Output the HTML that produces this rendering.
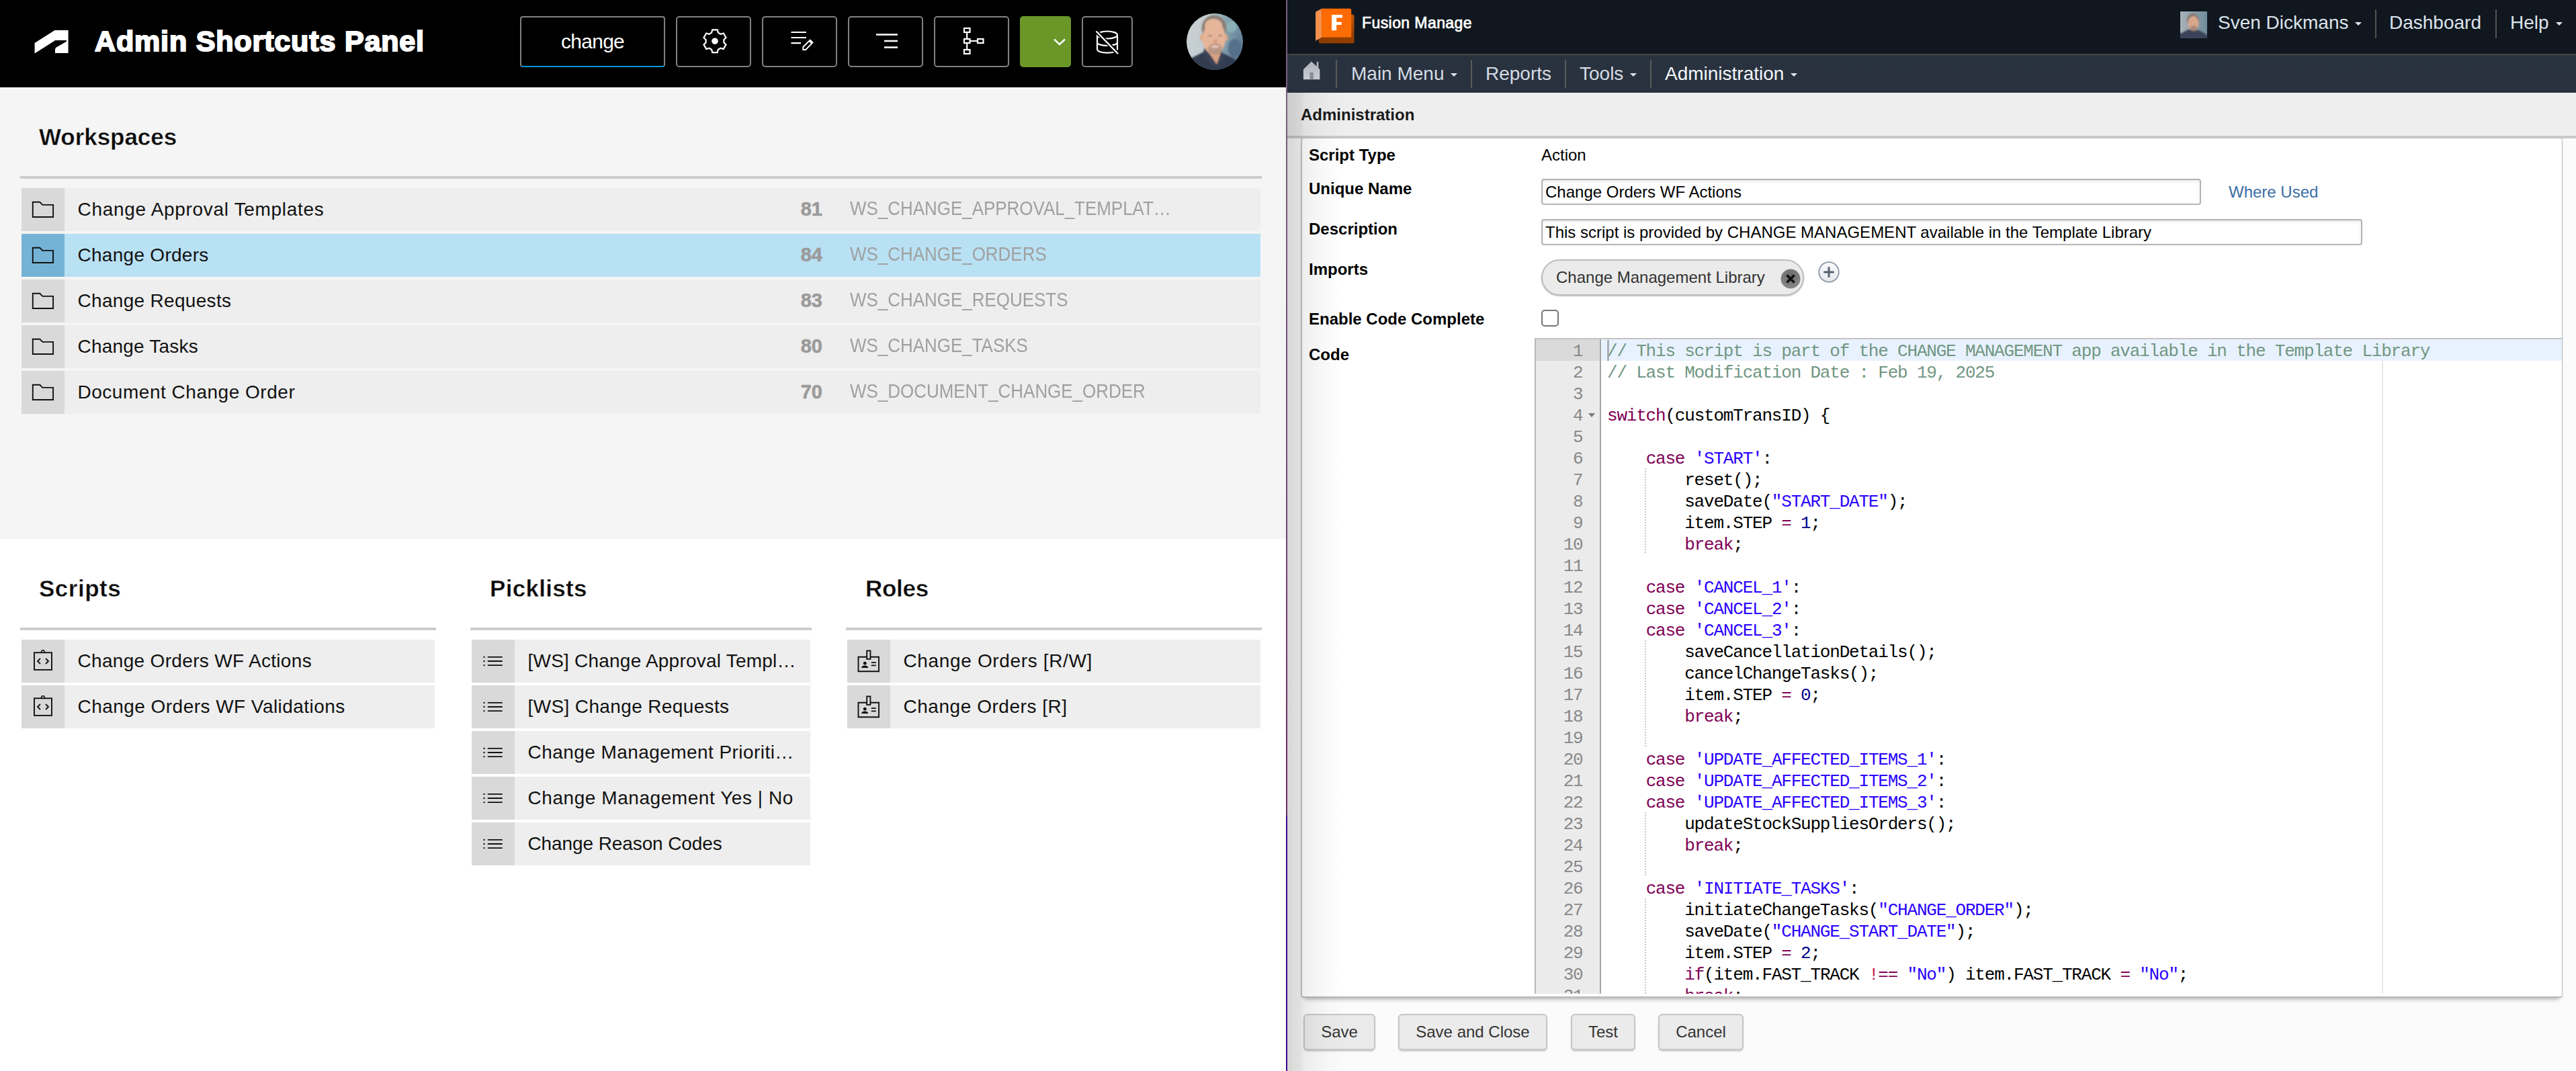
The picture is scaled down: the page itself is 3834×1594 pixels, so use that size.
<!DOCTYPE html>
<html><head><meta charset="utf-8"><title>Admin Shortcuts Panel</title>
<style>
*{box-sizing:border-box;margin:0;padding:0}
html,body{width:3834px;height:1594px;overflow:hidden;background:#fff}
body{font-family:"Liberation Sans",sans-serif;position:relative;color:#000}
.abs{position:absolute}
/* ================= LEFT PANEL ================= */
#left{position:absolute;left:0;top:0;width:1914px;height:1594px;background:#fff;overflow:hidden}
#lhead{position:absolute;left:0;top:0;width:1914px;height:130px;background:#000}
#lgray{position:absolute;left:0;top:130px;width:1914px;height:672px;background:#f5f5f5}
#ltitle{position:absolute;left:141px;top:34px;font-size:43px;font-weight:bold;color:#fff;letter-spacing:0.85px;line-height:54px;white-space:nowrap;-webkit-text-stroke:2.1px #fff}
#search{position:absolute;left:774px;top:24px;width:216px;height:76px;border:2px solid #808080;border-bottom:2px solid #0696d7;border-radius:4px;color:#fff;font-size:30px;text-align:center;line-height:72px;letter-spacing:-0.7px}
.tb{position:absolute;top:24px;height:76px;width:112px;border:2px solid #808080;border-radius:5px}
.tb svg{position:absolute;left:0;top:0}
#tbgreen{position:absolute;left:1518px;top:24px;width:76px;height:76px;background:#6a9728;border-radius:5px}
.h2{position:absolute;font-size:35px;font-weight:bold;color:#0a0a0a;white-space:nowrap;line-height:44px;letter-spacing:0.15px;-webkit-text-stroke:0.4px #fff}
.hr{position:absolute;height:4px;background:#cccccc}
.row{position:absolute;height:64px;background:#eeeeee}
.row .ic{position:absolute;left:0;top:0;width:64px;height:64px;background:#d9d9d9}
.row .ic svg{position:absolute;left:0;top:0}
.row .tx{position:absolute;left:83.5px;top:0;line-height:64.5px;font-size:28px;color:#121212;white-space:nowrap;letter-spacing:0.05px}
.row.sel{background:#b9e1f4}
.row.sel .ic{background:#75b3d6}
.row .id{position:absolute;right:652px;top:0;line-height:63px;font-size:29px;font-weight:bold;color:#9b9b9b;-webkit-text-stroke:0.6px #9b9b9b}
.row .sys{position:absolute;left:1233px;top:0;line-height:60px;font-size:30px;color:#a0a0a0;white-space:nowrap;transform-origin:0 50%;transform:scaleX(0.865)}
/* ================= RIGHT PANEL ================= */
#wborder{position:absolute;left:1914px;top:0;width:2px;height:1594px;background:linear-gradient(#7a627e 0,#75507a 40%,#6e2b5e 70%,#6e2b5e 76%,#3a0a8c 76.3%,#3a0a8c 100%)}
#right{position:absolute;left:1916px;top:0;width:1918px;height:1594px;background:#fbfbfb;overflow:hidden}
#rtop{position:absolute;left:0;top:0;width:1918px;height:82px;background:#10171f;border-bottom:2px solid #46443f}
#rnav{position:absolute;left:0;top:82px;width:1918px;height:56px;background:linear-gradient(#29323f,#28313d)}
.nv{position:absolute;top:-1px;line-height:58px;font-size:28px;color:#d5dce5;white-space:nowrap}
.nsep{position:absolute;top:7px;width:2px;height:42px;background:#5a5a58}
.caret{position:absolute;width:0;height:0;border-left:5px solid transparent;border-right:5px solid transparent;border-top:5px solid #dfe6ee}
.tv{position:absolute;top:0;line-height:67px;font-size:28px;color:#dce3eb;white-space:nowrap;margin-left:-1px}
.tsep{position:absolute;top:14px;width:2px;height:43px;background:#55534f}
#radm{position:absolute;left:0;top:138px;width:1918px;height:68px;background:#eeeeee;border-bottom:4px solid #c9c9c9}
#radm span{position:absolute;left:20px;top:0;line-height:65px;z-index:60;font-size:24px;font-weight:bold;color:#1a1a1a}
#lshadow{position:absolute;left:0;top:138px;width:90px;height:1456px;z-index:50;background:linear-gradient(90deg,rgba(0,0,0,0.15) 0,rgba(0,0,0,0.125) 8px,rgba(0,0,0,0.10) 20px,rgba(0,0,0,0.065) 24px,rgba(0,0,0,0.04) 40px,rgba(0,0,0,0.018) 60px,rgba(0,0,0,0) 88px)}
#box{position:absolute;left:20px;top:205px;width:1878px;height:1280px;background:#fff;border:1px solid #bcbcbc;border-left:2px solid #c6c6c6;border-bottom:2px solid #b9b9b9;border-radius:4px;box-shadow:0 6px 7px -5px rgba(0,0,0,0.4)}
#boxgrad{display:none}
.lb{position:absolute;left:32px;font-size:24px;font-weight:bold;color:#000;line-height:30px;white-space:nowrap}
.val{position:absolute;left:378px;font-size:24px;color:#000;line-height:30px;white-space:nowrap}
.inp{position:absolute;left:378px;height:39px;border:2px solid #b4b4b4;border-radius:4px;background:#fff;box-shadow:inset 0 2px 4px rgba(0,0,0,0.10);font-size:24px;line-height:35px;padding-left:4px;white-space:nowrap;overflow:hidden;color:#000}
#chip{position:absolute;left:378px;top:386px;width:391px;height:54px;border-radius:27px;background:#ebebeb;border:2px solid #bdbdbd;box-shadow:0 1px 2px rgba(0,0,0,0.25)}
#chip span{position:absolute;left:20px;top:0;line-height:50px;font-size:24px;color:#333}
/* code editor */
#ed{position:absolute;left:2284px;top:503px;width:1529px;height:976px;overflow:hidden;background:#fff;border-top:2px solid #c4c4c4}
#gut{position:absolute;left:0;top:0;width:99px;height:1100px;background:#ebebeb;border-left:2px solid #b8b8b8;border-right:2px solid #a5a5a5}
.gn{position:relative;height:32px;line-height:32px;font-family:"Liberation Mono",monospace;font-size:26px;letter-spacing:-1.2px;color:#888;text-align:right;padding-right:25.5px;padding-top:2px}
#gact{position:absolute;left:0;top:0;width:95px;height:32px;background:#dadada}
#lact{position:absolute;left:99px;top:0;width:1430px;height:32px;background:#e8f2fe}
#pm{position:absolute;left:1261px;top:0;width:2px;height:1100px;background:#e8e8e8}
#code{position:absolute;left:108px;top:0}
.ln{height:32px;line-height:32px;font-family:"Liberation Mono",monospace;font-size:26px;letter-spacing:-1.2px;color:#000;white-space:pre;padding-top:2px}
.k{color:#7f0055}.s{color:#2a00ff}.n{color:#00008b}.c{color:#719682}.r{color:#c4184f}
.guide{position:absolute;left:164px;width:2px;height:32px;background-image:linear-gradient(#c6c6c6 50%,rgba(0,0,0,0) 50%);background-size:2px 4px}
.btn{position:absolute;top:1509px;height:54px;border:2px solid #c6c6c6;border-radius:6px;background:#ebebeb;box-shadow:0 2px 2px rgba(0,0,0,0.17);font-size:24px;color:#333;text-align:center;line-height:49px}

</style></head>
<body>
<div id="left">
  <div id="lgray"></div>
  <div id="lhead">
    <svg class="abs" style="left:48px;top:42px" width="58" height="40" viewBox="48 42 58 40"><path fill="#fff" d="M51.6 64 L81.6 45 L101.6 45 L101.6 78.9 L82 78.9 L82 73.1 L83.3 70.8 L99 61.7 L99 60 L82.3 60 L52.5 78.9 L51.6 78.9 Z"/></svg>
    <div id="ltitle">Admin Shortcuts Panel</div>
    <div id="search">change</div>
    <!-- gear -->
    <div class="tb" style="left:1006px"><svg width="108" height="72" viewBox="0 0 108 72" fill="none" stroke="#fff" stroke-width="2.2" stroke-linejoin="miter">
      <g transform="translate(56,35.2)">
      <path d="M4.9 -12.6 L3.7 -16.9 L-3.7 -16.9 L-4.9 -12.6 L-8.5 -10.5 L-12.8 -11.7 L-16.5 -5.2 L-13.4 -2.1 L-13.4 2.1 L-16.5 5.2 L-12.8 11.7 L-8.5 10.5 L-4.9 12.6 L-3.7 16.9 L3.7 16.9 L4.9 12.6 L8.5 10.5 L12.8 11.7 L16.5 5.2 L13.4 2.1 L13.4 -2.1 L16.5 -5.2 L12.8 -11.7 L8.5 -10.5 Z"/>
      <circle cx="0" cy="0" r="4.8" fill="#fff" stroke="none"/></g></svg></div>
    <!-- edit -->
    <div class="tb" style="left:1134px"><svg width="108" height="72" viewBox="0 0 108 72" fill="none" stroke="#fff" stroke-width="2.2">
      <path d="M41.5 22 H64 M41.5 30 H64 M41.5 38.2 H56"/>
      <path d="M59.3 48 L59.3 44 L69.5 33.8 L73.3 37.6 L63.2 48 Z" stroke-width="1.9"/><path d="M67.6 35.6 L71.6 39.5 L74.4 36.7 L70.4 32.8 Z" fill="#fff" stroke="none"/></svg></div>
    <!-- align -->
    <div class="tb" style="left:1262px"><svg width="108" height="72" viewBox="0 0 108 72" fill="none" stroke="#fff" stroke-width="2.4">
      <path d="M40 25.5 H72 M52 35 H72 M52 44.5 H72"/></svg></div>
    <!-- tree -->
    <div class="tb" style="left:1390px"><svg width="108" height="72" viewBox="0 0 108 72" fill="none" stroke="#fff" stroke-width="2.2">
      <rect x="43" y="16" width="8.5" height="6"/><rect x="43" y="32" width="8.5" height="6"/><rect x="43" y="48" width="8.5" height="6"/><rect x="63" y="32" width="8.5" height="6"/>
      <path d="M47.2 22 V32 M47.2 38 V48 M51.5 35 H63"/></svg></div>
    <div id="tbgreen"><svg class="abs" style="left:0;top:0" width="76" height="76" viewBox="0 0 76 76" fill="none" stroke="#fff" stroke-width="2.4"><path d="M51 34.5 L59 42 L67 34.5"/></svg></div>
    <!-- db -->
    <div class="tb" style="left:1610px;width:76px"><svg width="72" height="72" viewBox="0 0 72 72" fill="none" stroke="#fff" stroke-width="2.2">
      <ellipse cx="36" cy="26" rx="15" ry="5.5"/><path d="M21 26 V47 C21 54.5 51 54.5 51 47 V26"/><path d="M21 37 C21 43.5 51 43.5 51 37"/>
      <path d="M19 20 L52 54" stroke="#000" stroke-width="6"/><path d="M19.5 20.5 L52 54" stroke-width="2.4"/></svg></div>
    <!-- avatar -->
    <svg class="abs" style="left:1766px;top:20px" width="84" height="84" viewBox="0 0 84 84">
      <defs><clipPath id="avc"><circle cx="42" cy="42" r="42"/></clipPath>
      <linearGradient id="avbg" x1="0" x2="1" y1="0" y2="0.25"><stop offset="0" stop-color="#ccd2d6"/><stop offset="0.4" stop-color="#c3ccd0"/><stop offset="0.62" stop-color="#8fadb6"/><stop offset="1" stop-color="#66849a"/></linearGradient>
      <filter id="avbl" x="-20%" y="-20%" width="140%" height="140%"><feGaussianBlur stdDeviation="1.3"/></filter></defs>
      <g clip-path="url(#avc)"><rect width="84" height="84" fill="url(#avbg)"/>
      <g filter="url(#avbl)">
        <ellipse cx="72" cy="52" rx="10" ry="14" fill="#55708a"/>
        <ellipse cx="66" cy="20" rx="9" ry="8" fill="#8cb0b8"/>
        <path d="M4 68 L26 57 L27 52 L52 58 L72 68 L84 76 L84 90 L0 90 Z" fill="#333c51"/>
        <path d="M30 50 L52 50 L51 62 L45 76 L34 60 Z" fill="#d8a184"/>
        <path d="M26.5 52 L34 60 L44.5 76 L40 80 L25 60 Z" fill="#3a4359"/>
        <path d="M51.5 57 L45 76 L48 80 L58 63 Z" fill="#3a4359"/>
        <ellipse cx="41" cy="22" rx="18.5" ry="19.5" fill="#8c8078"/>
        <ellipse cx="22.5" cy="36" rx="2.5" ry="5" fill="#dfa88b"/><ellipse cx="59.5" cy="36" rx="2.3" ry="5" fill="#d9a286"/>
        <ellipse cx="41" cy="37" rx="17" ry="24.5" fill="#e6b497"/>
        <ellipse cx="40" cy="18.5" rx="13" ry="10.5" fill="#e6b69a"/>
        <ellipse cx="42.5" cy="53" rx="10.5" ry="8.5" fill="#b89683"/>
        <ellipse cx="42.5" cy="49.5" rx="6.5" ry="2.2" fill="#e6c2b8"/>
        <ellipse cx="35" cy="33" rx="2.6" ry="1.1" fill="#6f6c72"/><ellipse cx="50" cy="33" rx="2.6" ry="1.1" fill="#6f6c72"/>
        <ellipse cx="43" cy="42" rx="2.5" ry="4" fill="#d69f84"/>
      </g></g></svg>
  </div>

  <div class="h2" style="left:58px;top:182px;-webkit-text-stroke:0.4px #f5f5f5;letter-spacing:-0.05px">Workspaces</div>
  <div class="hr" style="left:30px;top:262px;width:1848px"></div>
  <div class="row" style="left:32px;top:280px;width:1844px"><div class="ic"><svg width="64" height="64" viewBox="0 0 64 64" fill="none" stroke="#111" stroke-width="1.9"><path d="M16.8 43 V20.8 H27.3 L31.3 24.9 H47.1 V43 Z"/></svg></div><div class="tx" style="letter-spacing:0.69px">Change Approval Templates</div><div class="id">81</div><div class="sys">WS_CHANGE_APPROVAL_TEMPLAT…</div></div>
<div class="row sel" style="left:32px;top:348px;width:1844px"><div class="ic"><svg width="64" height="64" viewBox="0 0 64 64" fill="none" stroke="#111" stroke-width="1.9"><path d="M16.8 43 V20.8 H27.3 L31.3 24.9 H47.1 V43 Z"/></svg></div><div class="tx" style="letter-spacing:0.28px">Change Orders</div><div class="id">84</div><div class="sys">WS_CHANGE_ORDERS</div></div>
<div class="row" style="left:32px;top:416px;width:1844px"><div class="ic"><svg width="64" height="64" viewBox="0 0 64 64" fill="none" stroke="#111" stroke-width="1.9"><path d="M16.8 43 V20.8 H27.3 L31.3 24.9 H47.1 V43 Z"/></svg></div><div class="tx" style="letter-spacing:0.31px">Change Requests</div><div class="id">83</div><div class="sys">WS_CHANGE_REQUESTS</div></div>
<div class="row" style="left:32px;top:484px;width:1844px"><div class="ic"><svg width="64" height="64" viewBox="0 0 64 64" fill="none" stroke="#111" stroke-width="1.9"><path d="M16.8 43 V20.8 H27.3 L31.3 24.9 H47.1 V43 Z"/></svg></div><div class="tx" style="letter-spacing:0.21px">Change Tasks</div><div class="id">80</div><div class="sys">WS_CHANGE_TASKS</div></div>
<div class="row" style="left:32px;top:552px;width:1844px"><div class="ic"><svg width="64" height="64" viewBox="0 0 64 64" fill="none" stroke="#111" stroke-width="1.9"><path d="M16.8 43 V20.8 H27.3 L31.3 24.9 H47.1 V43 Z"/></svg></div><div class="tx" style="letter-spacing:0.52px">Document Change Order</div><div class="id">70</div><div class="sys">WS_DOCUMENT_CHANGE_ORDER</div></div>


  <div class="h2" style="left:58px;top:854px;letter-spacing:0.5px">Scripts</div>
  <div class="hr" style="left:30px;top:934px;width:619px"></div>
  <div class="h2" style="left:729px;top:854px;letter-spacing:0.3px">Picklists</div>
  <div class="hr" style="left:700px;top:934px;width:508px"></div>
  <div class="h2" style="left:1288px;top:854px;letter-spacing:-0.3px">Roles</div>
  <div class="hr" style="left:1259px;top:934px;width:619px"></div>
  <div class="row" style="left:32px;top:952px;width:615px"><div class="ic"><svg width="64" height="64" viewBox="0 0 64 64" fill="none" stroke="#111" stroke-width="1.9"><rect x="19" y="19.3" width="26" height="25.6"/><path d="M29.7 19 A2.4 2.5 0 1 1 34.3 19" stroke-width="1.6"/><path d="M28 28 L24 32 L28 36 M36 28 L40 32 L36 36" stroke-width="1.8"/></svg></div><div class="tx" style="letter-spacing:0.32px">Change Orders WF Actions</div></div>
<div class="row" style="left:32px;top:1020px;width:615px"><div class="ic"><svg width="64" height="64" viewBox="0 0 64 64" fill="none" stroke="#111" stroke-width="1.9"><rect x="19" y="19.3" width="26" height="25.6"/><path d="M29.7 19 A2.4 2.5 0 1 1 34.3 19" stroke-width="1.6"/><path d="M28 28 L24 32 L28 36 M36 28 L40 32 L36 36" stroke-width="1.8"/></svg></div><div class="tx" style="letter-spacing:0.46px">Change Orders WF Validations</div></div>
<div class="row" style="left:702px;top:952px;width:504px"><div class="ic"><svg width="64" height="64" viewBox="0 0 64 64" fill="none" stroke="#111" stroke-width="1.9" stroke-linecap="round"><path d="M24.6 25.9 H45 M24.6 32 H45 M24.6 38.1 H45"/><circle cx="18.5" cy="25.9" r="1.2" fill="#111" stroke="none"/><circle cx="18.5" cy="32" r="1.2" fill="#111" stroke="none"/><circle cx="18.5" cy="38.1" r="1.2" fill="#111" stroke="none"/></svg></div><div class="tx" style="letter-spacing:0.22px">[WS] Change Approval Templ…</div></div>
<div class="row" style="left:702px;top:1020px;width:504px"><div class="ic"><svg width="64" height="64" viewBox="0 0 64 64" fill="none" stroke="#111" stroke-width="1.9" stroke-linecap="round"><path d="M24.6 25.9 H45 M24.6 32 H45 M24.6 38.1 H45"/><circle cx="18.5" cy="25.9" r="1.2" fill="#111" stroke="none"/><circle cx="18.5" cy="32" r="1.2" fill="#111" stroke="none"/><circle cx="18.5" cy="38.1" r="1.2" fill="#111" stroke="none"/></svg></div><div class="tx" style="letter-spacing:0.37px">[WS] Change Requests</div></div>
<div class="row" style="left:702px;top:1088px;width:504px"><div class="ic"><svg width="64" height="64" viewBox="0 0 64 64" fill="none" stroke="#111" stroke-width="1.9" stroke-linecap="round"><path d="M24.6 25.9 H45 M24.6 32 H45 M24.6 38.1 H45"/><circle cx="18.5" cy="25.9" r="1.2" fill="#111" stroke="none"/><circle cx="18.5" cy="32" r="1.2" fill="#111" stroke="none"/><circle cx="18.5" cy="38.1" r="1.2" fill="#111" stroke="none"/></svg></div><div class="tx" style="letter-spacing:0.44px">Change Management Prioriti…</div></div>
<div class="row" style="left:702px;top:1156px;width:504px"><div class="ic"><svg width="64" height="64" viewBox="0 0 64 64" fill="none" stroke="#111" stroke-width="1.9" stroke-linecap="round"><path d="M24.6 25.9 H45 M24.6 32 H45 M24.6 38.1 H45"/><circle cx="18.5" cy="25.9" r="1.2" fill="#111" stroke="none"/><circle cx="18.5" cy="32" r="1.2" fill="#111" stroke="none"/><circle cx="18.5" cy="38.1" r="1.2" fill="#111" stroke="none"/></svg></div><div class="tx" style="letter-spacing:0.56px">Change Management Yes | No</div></div>
<div class="row" style="left:702px;top:1224px;width:504px"><div class="ic"><svg width="64" height="64" viewBox="0 0 64 64" fill="none" stroke="#111" stroke-width="1.9" stroke-linecap="round"><path d="M24.6 25.9 H45 M24.6 32 H45 M24.6 38.1 H45"/><circle cx="18.5" cy="25.9" r="1.2" fill="#111" stroke="none"/><circle cx="18.5" cy="32" r="1.2" fill="#111" stroke="none"/><circle cx="18.5" cy="38.1" r="1.2" fill="#111" stroke="none"/></svg></div><div class="tx" style="letter-spacing:-0.1px">Change Reason Codes</div></div>
<div class="row" style="left:1261px;top:952px;width:615px"><div class="ic"><svg width="64" height="64" viewBox="0 0 64 64" fill="none" stroke="#111" stroke-width="1.9"><path d="M29.2 25.8 H16.5 V47.3 H47 V25.8 H34.4"/><rect x="29.2" y="16.5" width="5.2" height="12.4"/><circle cx="26.3" cy="35.2" r="2.4" fill="#111" stroke="none"/><path d="M21 42 C21.6 37.4 30.8 37.4 31.3 42 Z" fill="#111" stroke="none"/><path d="M35.8 34.1 H42.9 M35.8 38.3 H42.9" stroke-width="1.8"/></svg></div><div class="tx" style="letter-spacing:0.65px">Change Orders [R/W]</div></div>
<div class="row" style="left:1261px;top:1020px;width:615px"><div class="ic"><svg width="64" height="64" viewBox="0 0 64 64" fill="none" stroke="#111" stroke-width="1.9"><path d="M29.2 25.8 H16.5 V47.3 H47 V25.8 H34.4"/><rect x="29.2" y="16.5" width="5.2" height="12.4"/><circle cx="26.3" cy="35.2" r="2.4" fill="#111" stroke="none"/><path d="M21 42 C21.6 37.4 30.8 37.4 31.3 42 Z" fill="#111" stroke="none"/><path d="M35.8 34.1 H42.9 M35.8 38.3 H42.9" stroke-width="1.8"/></svg></div><div class="tx" style="letter-spacing:0.54px">Change Orders [R]</div></div>

</div>

<div id="wborder"></div>

<div id="right">
  <div id="rtop">
    <svg class="abs" style="left:40px;top:10px" width="62" height="58" viewBox="1956 10 62 58">
      <defs><linearGradient id="fd" x1="0" y1="1" x2="1" y2="0"><stop offset="0" stop-color="#8a3b00"/><stop offset="0.6" stop-color="#963f00"/><stop offset="1" stop-color="#c65800"/></linearGradient>
      <linearGradient id="ff" x1="0" y1="0" x2="0" y2="1"><stop offset="0" stop-color="#ff6a00"/><stop offset="1" stop-color="#fb6d05"/></linearGradient></defs>
      <rect x="1962.7" y="21.7" width="52.8" height="42.8" rx="2.2" fill="url(#fd)"/>
      <path d="M1958 17.7 L1967.3 12.8 L1967.3 55.6 L1958 60.7 Z" fill="#f4914e"/>
      <path d="M1967.2 12.8 L2008.6 12.8 Q2011.2 12.8 2011.2 15.4 L2011.2 55.5 L1967.2 55.5 Z" fill="url(#ff)"/>
      <path d="M1982 22.1 H1998 V26.5 H1989.2 V32.8 H1996.7 V37.1 H1989.2 V45.2 H1982 Z" fill="#fff"/>
    </svg>
    <div class="abs" style="left:111px;top:19px;font-size:23px;font-weight:normal;color:#fff;line-height:30px;letter-spacing:0.42px;white-space:nowrap;-webkit-text-stroke:0.7px #fff">Fusion Manage</div>
    <svg class="abs" style="left:1329px;top:17px" width="40" height="40" viewBox="0 0 40 40">
      <defs><linearGradient id="av2" x1="0" x2="1"><stop offset="0" stop-color="#a9b2b8"/><stop offset="1" stop-color="#6f8c9c"/></linearGradient><filter id="bl2"><feGaussianBlur stdDeviation="1.2"/></filter></defs>
      <rect width="40" height="40" fill="url(#av2)"/>
      <g filter="url(#bl2)"><path d="M-2 34 L12 27 L28 28 L42 36 L42 44 L-2 44 Z" fill="#3a4258"/><ellipse cx="19" cy="13" rx="9" ry="10" fill="#857870"/><ellipse cx="19.5" cy="18" rx="8" ry="11" fill="#d9a88c"/><ellipse cx="20" cy="25" rx="5" ry="4" fill="#a88776"/></g></svg>
    <div class="tv" style="left:1386px">Sven Dickmans</div><div class="caret" style="left:1589px;top:33px"></div>
    <div class="tsep" style="left:1619px"></div>
    <div class="tv" style="left:1641px">Dashboard</div>
    <div class="tsep" style="left:1798px"></div>
    <div class="tv" style="left:1821px">Help</div><div class="caret" style="left:1888px;top:33px"></div>
  </div>
  <div id="rnav">
    <svg class="abs" style="left:22px;top:6px" width="30" height="32" viewBox="1938 88 30 32"><defs><linearGradient id="hg" x1="0" x2="0" y1="0" y2="1"><stop offset="0" stop-color="#aeb3bd"/><stop offset="1" stop-color="#c9ccd3"/></linearGradient></defs>
      <path fill="url(#hg)" d="M1951.8 91.4 L1959.7 98.8 V92 H1962.3 V101.2 L1964.4 103.2 V118.2 H1939.9 V103.2 Z"/><path fill="#878d99" d="M1949.4 118.2 V109.3 Q1949.4 107.6 1951 107.6 H1953.2 Q1954.8 107.6 1954.8 109.3 V118.2 Z"/></svg>
    <div class="nsep" style="left:72px"></div>
    <div class="nv" style="left:95px">Main Menu</div><div class="caret" style="left:243px;top:27px"></div>
    <div class="nsep" style="left:273px"></div>
    <div class="nv" style="left:295px">Reports</div>
    <div class="nsep" style="left:413px"></div>
    <div class="nv" style="left:435px">Tools</div><div class="caret" style="left:510px;top:27px"></div>
    <div class="nsep" style="left:540px"></div>
    <div class="nv" style="left:562px;color:#f3f6f9">Administration</div><div class="caret" style="left:749px;top:27px"></div>
  </div>
  <div id="radm"><span>Administration</span></div>
  <div id="lshadow"></div>
  <div id="box"></div>
  <div id="boxgrad"></div>

  <div class="lb" style="top:216px">Script Type</div>
  <div class="lb" style="top:266px">Unique Name</div>
  <div class="lb" style="top:326px">Description</div>
  <div class="lb" style="top:386px">Imports</div>
  <div class="lb" style="top:460px">Enable Code Complete</div>
  <div class="lb" style="top:513px">Code</div>

  <div class="val" style="top:216px">Action</div>
  <div class="inp" style="top:266px;width:982px">Change Orders WF Actions</div>
  <div class="val" style="left:1401px;top:271px;color:#3a6ea5">Where Used</div>
  <div class="inp" style="top:326px;width:1222px">This script is provided by CHANGE MANAGEMENT available in the Template Library</div>
  <div id="chip"><span>Change Management Library</span>
    <svg class="abs" style="left:352px;top:10px" width="34" height="34" viewBox="0 0 34 34"><defs><radialGradient id="xg" cx="0.5" cy="0.35" r="0.7"><stop offset="0" stop-color="#6a6a6a"/><stop offset="1" stop-color="#8a8a8a"/></radialGradient></defs><circle cx="17" cy="17" r="14.5" fill="url(#xg)"/><path d="M11.5 11.5 L22.5 22.5 M22.5 11.5 L11.5 22.5" stroke="#111" stroke-width="3.6"/></svg></div>
  <svg class="abs" style="left:788px;top:387px" width="36" height="36" viewBox="0 0 36 36"><defs><linearGradient id="pg" x1="0" x2="0" y1="0" y2="1"><stop offset="0" stop-color="#fdfdfe"/><stop offset="1" stop-color="#e4e7ee"/></linearGradient></defs><circle cx="18" cy="18" r="14.8" fill="url(#pg)" stroke="#8d95a6" stroke-width="1.8"/><path d="M18 10.3 V25.7 M10.3 18 H25.7" stroke="#586175" stroke-width="3"/></svg>
  <div class="abs" style="left:378px;top:461px;width:26px;height:25px;border:2px solid #767676;border-radius:5px;background:#fff"></div>

  <div id="ed" style="left:368px">
    <div id="pm"></div>
    <div id="lact"></div>
    <div id="gut"><div id="gact"></div><div class="gn">1</div><div class="gn">2</div><div class="gn">3</div><div class="gn">4</div><div class="gn">5</div><div class="gn">6</div><div class="gn">7</div><div class="gn">8</div><div class="gn">9</div><div class="gn">10</div><div class="gn">11</div><div class="gn">12</div><div class="gn">13</div><div class="gn">14</div><div class="gn">15</div><div class="gn">16</div><div class="gn">17</div><div class="gn">18</div><div class="gn">19</div><div class="gn">20</div><div class="gn">21</div><div class="gn">22</div><div class="gn">23</div><div class="gn">24</div><div class="gn">25</div><div class="gn">26</div><div class="gn">27</div><div class="gn">28</div><div class="gn">29</div><div class="gn">30</div><div class="gn">31</div></div>
    <div class="abs" style="left:80px;top:110px;width:0;height:0;border-left:5px solid transparent;border-right:5px solid transparent;border-top:6px solid #777"></div>
    <div class="abs" style="left:108px;top:1px;width:3px;height:31px;background:#a9b0ba"></div>
    <div class="guide" style="top:192px"></div><div class="guide" style="top:224px"></div><div class="guide" style="top:256px"></div><div class="guide" style="top:288px"></div><div class="guide" style="top:448px"></div><div class="guide" style="top:480px"></div><div class="guide" style="top:512px"></div><div class="guide" style="top:544px"></div><div class="guide" style="top:576px"></div><div class="guide" style="top:704px"></div><div class="guide" style="top:736px"></div><div class="guide" style="top:768px"></div><div class="guide" style="top:832px"></div><div class="guide" style="top:864px"></div><div class="guide" style="top:896px"></div><div class="guide" style="top:928px"></div><div class="guide" style="top:960px"></div>
    <div id="code"><div class="ln"><span class="c">// This script is part of the CHANGE MANAGEMENT app available in the Template Library</span></div><div class="ln"><span class="c">// Last Modification Date : Feb 19, 2025</span></div><div class="ln">&nbsp;</div><div class="ln"><span class="k">switch</span>(customTransID) {</div><div class="ln">&nbsp;</div><div class="ln">    <span class="k">case</span> <span class="s">'START'</span>:</div><div class="ln">        reset();</div><div class="ln">        saveDate(<span class="s">"START_DATE"</span>);</div><div class="ln">        item.STEP <span class="k">=</span> <span class="n">1</span>;</div><div class="ln">        <span class="k">break</span>;</div><div class="ln">&nbsp;</div><div class="ln">    <span class="k">case</span> <span class="s">'CANCEL_1'</span>:</div><div class="ln">    <span class="k">case</span> <span class="s">'CANCEL_2'</span>:</div><div class="ln">    <span class="k">case</span> <span class="s">'CANCEL_3'</span>:</div><div class="ln">        saveCancellationDetails();</div><div class="ln">        cancelChangeTasks();</div><div class="ln">        item.STEP <span class="k">=</span> <span class="n">0</span>;</div><div class="ln">        <span class="k">break</span>;</div><div class="ln">&nbsp;</div><div class="ln">    <span class="k">case</span> <span class="s">'UPDATE_AFFECTED_ITEMS_1'</span>:</div><div class="ln">    <span class="k">case</span> <span class="s">'UPDATE_AFFECTED_ITEMS_2'</span>:</div><div class="ln">    <span class="k">case</span> <span class="s">'UPDATE_AFFECTED_ITEMS_3'</span>:</div><div class="ln">        updateStockSuppliesOrders();</div><div class="ln">        <span class="k">break</span>;</div><div class="ln">&nbsp;</div><div class="ln">    <span class="k">case</span> <span class="s">'INITIATE_TASKS'</span>:</div><div class="ln">        initiateChangeTasks(<span class="s">"CHANGE_ORDER"</span>);</div><div class="ln">        saveDate(<span class="s">"CHANGE_START_DATE"</span>);</div><div class="ln">        item.STEP <span class="k">=</span> <span class="n">2</span>;</div><div class="ln">        <span class="k">if</span>(item.FAST_TRACK <span class="r">!</span><span class="k">==</span> <span class="s">"No"</span>) item.FAST_TRACK <span class="k">=</span> <span class="s">"No"</span>;</div><div class="ln">        <span class="k">break</span>;</div></div>
  </div>

  <div class="btn" style="left:24px;width:107px">Save</div>
  <div class="btn" style="left:165px;width:222px">Save and Close</div>
  <div class="btn" style="left:422px;width:96px">Test</div>
  <div class="btn" style="left:552px;width:127px">Cancel</div>
</div>

</body></html>
